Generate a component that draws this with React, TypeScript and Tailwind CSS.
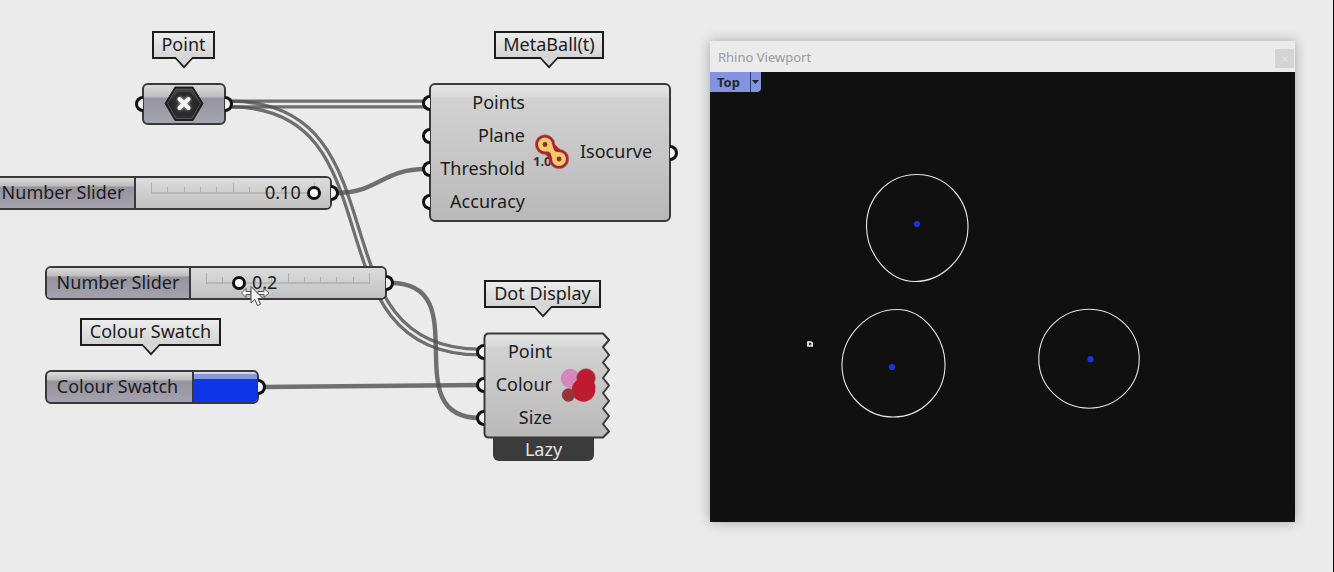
import { useState } from "react";
import type { ReactNode } from "react";

const SHELL = "absolute flex rounded-md border-2 border-[#39393b]";
const GREY_FACE = "bg-[linear-gradient(#e4e4e4,#dadada_12px,#d2d2d2_13px,#b9b9b9)]";
const MAUVE_FACE = "bg-[linear-gradient(#dcdcdc,#bcbcbe_8px,#94939e_9px,#a3a2ae)]";
const MAUVE_FACE_TALL = "bg-[linear-gradient(#dadada,#bebec0_12px,#94939f_13px,#a5a4b1)]";

function Grip({ side }: { side: "left" | "right" }) {
  return side === "left" ? (
    <span className="absolute top-1/2 -left-[9px] h-4 w-2 -translate-y-1/2 rounded-l-full border-3 border-r-0 border-[#111] bg-[#f2f2f2]" />
  ) : (
    <span className="absolute top-1/2 -right-[9px] h-4 w-2 -translate-y-1/2 rounded-r-full border-3 border-l-0 border-[#111] bg-[#f2f2f2]" />
  );
}

function Tag({ place, children }: { place: string; children: ReactNode }) {
  return (
    <div className={`absolute flex flex-col items-center ${place}`}>
      <div className="flex h-7 w-full items-center justify-center border-2 border-[#1c1c1c] bg-linear-to-b from-[#ececec] to-[#d4d4d4] pb-[2px] whitespace-nowrap">
        {children}
      </div>
      <svg className="relative -mt-[2px] h-3 w-5" viewBox="0 0 20 12" aria-hidden="true">
        <path d="M2 0V1.200L10 10L18 1.200V0Z" fill="#d6d6d6" />
        <path d="M1.500 1L10 10.200L18.500 1" fill="none" stroke="#1c1c1c" strokeWidth="1.700" />
      </svg>
    </div>
  );
}

function Port({ children }: { children: ReactNode }) {
  return (
    <li className="relative flex h-[33px] items-center justify-end pb-[2px]">
      <Grip side="left" />
      {children}
    </li>
  );
}

function Wires() {
  const rails = ["M230 104H426", "M230 104C405 104 307 352 480 352"];
  return (
    <svg className="absolute top-0 left-0 h-[572px] w-[710px]" viewBox="0 0 710 572" fill="none" aria-hidden="true">
      {rails.map((d, i) => (
        <g key={d}>
          <mask id={`rail-${i}`} maskUnits="userSpaceOnUse" x="0" y="0" width="710" height="572">
            <path d={d} stroke="#fff" strokeWidth="9" />
            <path d={d} stroke="#000" strokeWidth="2.400" />
          </mask>
          <path d={d} stroke="#505050" strokeOpacity="0.8" strokeWidth="10" mask={`url(#rail-${i})`} />
        </g>
      ))}
      <g stroke="#505050" strokeOpacity="0.8" strokeWidth="4.400">
        <path d="M336 193C378 193 382 169 426 169" />
        <path d="M391 283C478 283 394 418 480 418" />
        <path d="M262 387L480 385" />
      </g>
    </svg>
  );
}

function NumberSlider({
  place,
  max,
  start,
  digits,
  valuePlace,
}: {
  place: string;
  max: number;
  start: number;
  digits: number;
  valuePlace: string;
}) {
  const [value, setValue] = useState(start);
  return (
    <label className={`${SHELL} h-[34px] w-[342px] ${place}`}>
      <span
        className={`flex w-[144px] items-center justify-center rounded-l border-r-2 border-[#39393b] pb-[2px] ${MAUVE_FACE}`}
      >
        Number Slider
      </span>
      <span className="relative flex flex-1 items-center rounded-r bg-linear-to-b from-[#dcdcdc] to-[#c0c1c0] px-2">
        <svg className="absolute top-1 left-[14px] h-3 w-[166px]" viewBox="0 0 166 12" aria-hidden="true">
          {Array.from({ length: 11 }, (_, i) => (
            <path
              key={i}
              d={`M${1.5 + Math.round(i * 16.3)} ${i % 5 === 0 ? 1 : 5}V11`}
              stroke="#aeaeb0"
            />
          ))}
          <path d="M1 11H165" stroke="#b0b0b2" strokeWidth="1.500" />
        </svg>
        <span className={`absolute top-0 flex h-[30px] items-center pb-[2px] ${valuePlace}`}>
          {value.toFixed(digits)}
        </span>
        <input
          type="range"
          min={0}
          max={max}
          step={max / 10}
          value={value}
          onChange={(e) => setValue(Number(e.target.value))}
          className="relative h-[14px] w-[177px] appearance-none bg-transparent [&::-webkit-slider-thumb]:size-[14px] [&::-webkit-slider-thumb]:appearance-none [&::-webkit-slider-thumb]:rounded-full [&::-webkit-slider-thumb]:border-[3px] [&::-webkit-slider-thumb]:border-solid [&::-webkit-slider-thumb]:border-[#0e0e0e] [&::-webkit-slider-thumb]:bg-white"
        />
      </span>
      <Grip side="right" />
    </label>
  );
}

function HexIcon() {
  return (
    <svg className="h-9 w-10" viewBox="0 0 40 36" aria-hidden="true">
      <defs>
        <linearGradient id="hex" x1="0" y1="0" x2="0" y2="1">
          <stop offset="0" stopColor="#4c4c4c" />
          <stop offset="0.5" stopColor="#222" />
          <stop offset="1" stopColor="#303030" />
        </linearGradient>
        <filter id="soft" x="-50%" y="-50%" width="200%" height="200%">
          <feGaussianBlur stdDeviation="1.400" />
        </filter>
      </defs>
      <path d="M11 1H29L39 17.500L29 34.500H11L1 17.500Z" fill="#1a1a1a" stroke="#222" strokeLinejoin="round" />
      <path d="M12 3H28L36.500 17.500L28 32.500H12L3.500 17.500Z" fill="url(#hex)" stroke="#585858" />
      <path d="M13.500 6H26.500L33 17.500L26.500 29.500H13.500L7 17.500Z" fill="#292929" />
      <path d="M14.500 12L25.500 23M25.500 12L14.500 23" stroke="#aaa" strokeWidth="5" filter="url(#soft)" />
      <path d="M15.500 13L24.500 22M24.500 13L15.500 22" stroke="#f6f6f6" strokeWidth="4" strokeLinecap="round" />
    </svg>
  );
}

function MetaBallIcon() {
  return (
    <svg className="h-9 w-10" viewBox="0 0 40 36" aria-hidden="true">
      <text x="1" y="31.500" fontFamily="Noto Sans, sans-serif" fontSize="13" fontWeight="700" fill="#333">
        1.0
      </text>
      <g fill="#b0232c" stroke="#8b7274" strokeOpacity="0.5">
        <circle cx="13" cy="10.500" r="9.800" />
        <circle cx="27" cy="25" r="9.800" />
      </g>
      <path d="M13 20L22.500 10L28 15.500L18 25Z" fill="#b0232c" />
      <g fill="#eecb6c">
        <circle cx="13" cy="10.500" r="7" />
        <circle cx="27" cy="25" r="7" />
        <path d="M13 17.400Q17 17 18.500 19L20 24L27 18.100Q23 18 22 16L20 10Z" />
      </g>
      <g fill="#8c2c2c">
        <circle cx="13" cy="10.500" r="2.400" />
        <circle cx="27" cy="25" r="2.400" />
      </g>
    </svg>
  );
}

function DotsIcon() {
  return (
    <svg className="h-9 w-9" viewBox="0 0 36 36" aria-hidden="true">
      <circle cx="10.500" cy="11.500" r="9.700" fill="#d586bd" />
      <circle cx="26" cy="11" r="9.300" fill="#bf1b30" stroke="#8d5560" strokeWidth="0.600" />
      <circle cx="23.500" cy="23" r="11.700" fill="#bf1b30" />
      <circle cx="28" cy="20" r="7.500" fill="#bf1b30" />
      <circle cx="8.500" cy="28" r="6.300" fill="#9b3038" stroke="#7b4449" strokeWidth="0.800" />
    </svg>
  );
}

function DotDisplay() {
  return (
    <section className="absolute top-[332px] left-[483px] w-[128px]">
      <svg className="absolute top-0 left-0 h-[108px] w-[128px]" viewBox="0 0 128 108" aria-hidden="true">
        <defs>
          <linearGradient id="face" x1="0" y1="0" x2="0" y2="1">
            <stop offset="0" stopColor="#e4e4e4" />
            <stop offset="0.12" stopColor="#dadada" />
            <stop offset="0.13" stopColor="#d2d2d2" />
            <stop offset="1" stopColor="#b9b9b9" />
          </linearGradient>
        </defs>
        <path
          d="M6 1.500H120L126 8L120 15L126 23L120 30.500L126 38L120 46L126 53.500L120 61L126 69L120 76.500L126 84L120 92L126 99.500L120 105.500H6Q1.500 105.500 1.500 101V6Q1.500 1.500 6 1.500Z"
          fill="url(#face)"
          stroke="#39393b"
          strokeWidth="2"
          strokeLinejoin="round"
        />
      </svg>
      <div className="relative flex h-[106px] items-center pl-[2px]">
        <ul className="w-[67px]">
          <Port>Point</Port>
          <Port>Colour</Port>
          <Port>Size</Port>
        </ul>
        <span className="ml-2">
          <DotsIcon />
        </span>
      </div>
      <div className="relative mx-[10px] flex h-[23px] w-[101px] items-center justify-center rounded-b-md bg-[#3b3b3b] pb-[2px] text-[#e4e4e4]">
        Lazy
      </div>
    </section>
  );
}

function Cursor() {
  return (
    <svg className="absolute top-[285px] left-[240px] h-6 w-8" viewBox="0 0 32 24" aria-hidden="true">
      <g fill="#f4f4f4" stroke="#555" strokeWidth="1">
        <path d="M1.500 8L6 3.500V6.500H11V9.500H6V12.500Z" />
        <path d="M29 8L24 3.500V6.500H18V9.500H24V12.500Z" />
        <path d="M11 1.500V18L14.800 14.500L17.500 20.500L20.500 19.200L18 13.500H23Z" stroke="#444" />
      </g>
    </svg>
  );
}

function Viewport() {
  return (
    <section className="absolute top-[41px] left-[710px] flex h-[481px] w-[585px] flex-col bg-[#101010] shadow-[0_0_12px_rgba(0,0,0,0.3)]">
      <header className="flex h-[31px] items-center justify-between bg-[#ebebeb] pr-px pl-2">
        <h2 className="text-[13px] text-[#9a9a9a]">Rhino Viewport</h2>
        <button
          type="button"
          aria-label="Close"
          className="mt-1 flex size-[19px] items-center justify-center bg-[#d4d4d4]"
        >
          <svg className="size-[6px]" viewBox="0 0 8 8" aria-hidden="true">
            <path d="M1 1L7 7M7 1L1 7" stroke="#e0e0e0" strokeWidth="1.500" />
          </svg>
        </button>
      </header>
      <div className="relative flex-1">
        <button
          type="button"
          className="relative flex h-5 items-center rounded-br bg-[#8294e0] pl-[7px] text-[13px] font-bold text-[#26262c]"
        >
          <span className="pr-[10px]">Top</span>
          <span className="flex h-5 w-[11px] items-center justify-center border-l border-[#2c3a86]">
            <svg className="h-1 w-[7px]" viewBox="0 0 7 4" aria-hidden="true">
              <path d="M0 0H7L3.500 4Z" fill="#22232c" />
            </svg>
          </span>
        </button>
        <svg className="absolute top-0 left-0 h-[450px] w-[585px]" viewBox="710 72 585 450" fill="none" aria-hidden="true">
          <g stroke="#e6e6e6" strokeWidth="1.100">
            <path d="M917 174.500C946 174.500 968 199 968 227C968 257 942 281.500 915 281.500C888 281.500 866.500 253 866.500 226C866.500 198 888 174.500 917 174.500Z" />
            <path d="M897 309.500C924 309.500 945 338 945 365C945 393 922 417 893 417C865 417 842 393 842 365C842 336 868 309.500 897 309.500Z" />
            <ellipse cx="1089" cy="358.700" rx="50.200" ry="49.500" />
          </g>
          <g fill="#1a35dc">
            <circle cx="917" cy="224" r="3.100" />
            <circle cx="892" cy="367" r="3.100" />
            <circle cx="1090.500" cy="359.200" r="3.100" />
          </g>
          <path d="M808 342H811L812.200 343.200V346H808Z" stroke="#eee" strokeWidth="1.700" />
          <path d="M809.500 343.500L811 345" stroke="#777" />
        </svg>
      </div>
    </section>
  );
}

export default function App() {
  return (
    <main className="relative min-h-screen overflow-hidden border-r border-[#111] bg-[#ebebeb] font-['Noto_Sans','Open_Sans',sans-serif] text-[18px] leading-6 text-[#1c1c1c]">
      <Wires />

      <Tag place="top-[31px] left-[152px] w-[63px]">Point</Tag>
      <section
        className={`${SHELL} top-[83px] left-[142px] h-[42px] w-[84px] items-center justify-center ${MAUVE_FACE_TALL}`}
      >
        <Grip side="left" />
        <HexIcon />
        <Grip side="right" />
      </section>

      <Tag place="top-[31px] left-[494px] w-[110px]">MetaBall(t)</Tag>
      <section className={`${SHELL} top-[83px] left-[429px] w-[242px] items-center pt-px pb-[2px] ${GREY_FACE}`}>
        <ul className="w-[94px]">
          <Port>Points</Port>
          <Port>Plane</Port>
          <Port>Threshold</Port>
          <Port>Accuracy</Port>
        </ul>
        <span className="ml-[7px]">
          <MetaBallIcon />
        </span>
        <span className="ml-2 pb-[2px]">Isocurve</span>
        <Grip side="right" />
      </section>

      <NumberSlider place="top-[176px] -left-[10px]" max={0.1} start={0.1} digits={2} valuePlace="left-[129px]" />
      <NumberSlider place="top-[266px] left-[45px]" max={1} start={0.2} digits={1} valuePlace="left-[61px]" />

      <Tag place="top-[318px] left-[80px] w-[141px]">Colour Swatch</Tag>
      <section className={`${SHELL} top-[370px] left-[45px] h-[34px] w-[214px] ${MAUVE_FACE}`}>
        <span className="flex w-[147px] items-center justify-center border-r-2 border-[#39393b] pr-1 pb-[2px]">
          Colour Swatch
        </span>
        <button
          type="button"
          aria-label="Pick colour"
          className="mt-[2px] flex-1 rounded-br-sm bg-[linear-gradient(#8598dc_5px,#1034e8_5px)]"
        />
        <Grip side="right" />
      </section>

      <Tag place="top-[280px] left-[484px] w-[117px]">Dot Display</Tag>
      <DotDisplay />
      <Cursor />
      <Viewport />
    </main>
  );
}
